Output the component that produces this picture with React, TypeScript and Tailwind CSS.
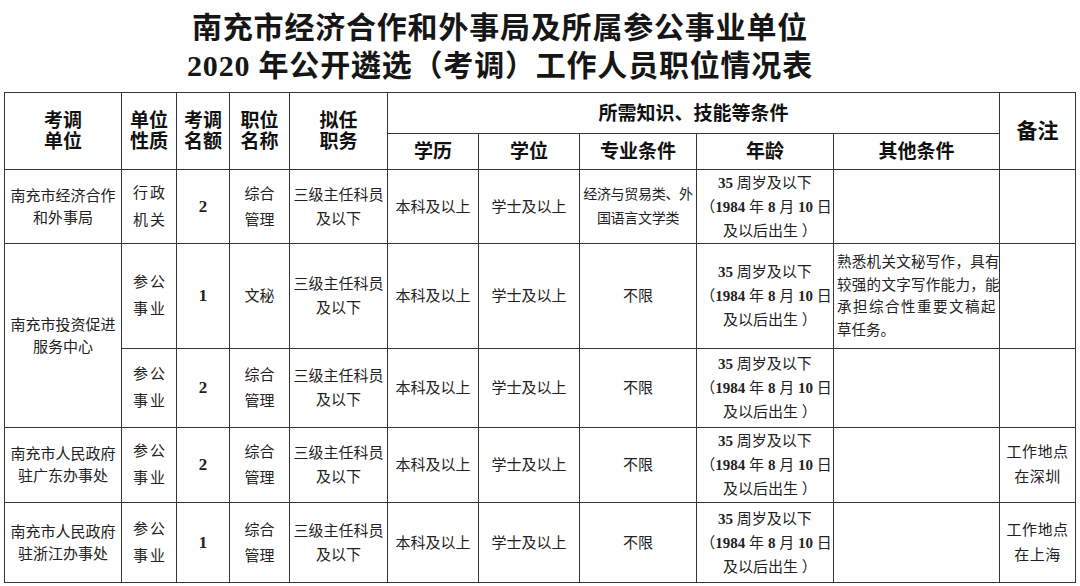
const serif = "font-['Liberation_Serif','Noto_Sans_CJK_SC',sans-serif]";

const Lines = ({ lines }: { lines: React.ReactNode[] }) => (
  <div className="flex flex-col items-center">
    {lines.map((l, i) => (
      <div key={i} className="whitespace-nowrap">
        {l}
      </div>
    ))}
  </div>
);

const Age = () => (
  <div className="flex flex-col items-center leading-[24px] text-[15px]">
    <div className="whitespace-nowrap">
      <b>35</b> 周岁及以下
    </div>
    <div className="whitespace-nowrap pl-[2px]">
      （<b>1984</b> 年 <b>8</b> 月 <b>10</b> 日
    </div>
    <div className="whitespace-nowrap pl-[10px]">及以后出生 ）</div>
  </div>
);

type Row = {
  unit?: React.ReactNode[];
  unitSpan?: number;
  kind: string[];
  count: string;
  post: string[];
  duty: string[];
  major: string[];
  other?: boolean;
  note?: string[];
  h: string;
};

const rows: Row[] = [
  {
    unit: ["南充市经济合作", "和外事局"],
    kind: ["行政", "机关"],
    count: "2",
    post: ["综合", "管理"],
    duty: ["三级主任科员", "及以下"],
    major: ["经济与贸易类、外", "国语言文学类"],
    h: "h-[74px]",
  },
  {
    unit: ["南充市投资促进", "服务中心"],
    unitSpan: 2,
    kind: ["参公", "事业"],
    count: "1",
    post: ["文秘"],
    duty: ["三级主任科员", "及以下"],
    major: ["不限"],
    other: true,
    h: "h-[105px]",
  },
  {
    kind: ["参公", "事业"],
    count: "2",
    post: ["综合", "管理"],
    duty: ["三级主任科员", "及以下"],
    major: ["不限"],
    h: "h-[79px]",
  },
  {
    unit: ["南充市人民政府", "驻广东办事处"],
    kind: ["参公", "事业"],
    count: "2",
    post: ["综合", "管理"],
    duty: ["三级主任科员", "及以下"],
    major: ["不限"],
    note: ["工作地点", "在深圳"],
    h: "h-[75px]",
  },
  {
    unit: ["南充市人民政府", "驻浙江办事处"],
    kind: ["参公", "事业"],
    count: "1",
    post: ["综合", "管理"],
    duty: ["三级主任科员", "及以下"],
    major: ["不限"],
    note: ["工作地点", "在上海"],
    h: "h-[80px]",
  },
];

const td = "border border-[#363636] text-center align-middle p-0";
const th = "border border-[#363636] text-center align-middle p-0 font-bold text-[19px] leading-[21px] text-[#111]";

export default function App() {
  return (
    <div className={`w-[1080px] h-[586px] bg-white overflow-hidden ${serif}`}>
      <div className="pt-[9px] pr-[80px] text-center text-[30px] leading-[38px] font-bold text-[#161616] tracking-[0.8px]">
        <div>南充市经济合作和外事局及所属参公事业单位</div>
        <div>2020 年公开遴选（考调）工作人员职位情况表</div>
      </div>
      <table className="mt-[7px] ml-[4px] w-[1071px] table-fixed border-collapse">
        <colgroup>
          <col className="w-[117px]" />
          <col className="w-[55px]" />
          <col className="w-[53px]" />
          <col className="w-[60px]" />
          <col className="w-[98px]" />
          <col className="w-[91px]" />
          <col className="w-[101px]" />
          <col className="w-[117px]" />
          <col className="w-[137px]" />
          <col className="w-[166px]" />
          <col className="w-[76px]" />
        </colgroup>
        <thead>
          <tr className="h-[41px]">
            <th rowSpan={2} className={th}>
              <Lines lines={["考调", "单位"]} />
            </th>
            <th rowSpan={2} className={th}>
              <Lines lines={["单位", "性质"]} />
            </th>
            <th rowSpan={2} className={th}>
              <Lines lines={["考调", "名额"]} />
            </th>
            <th rowSpan={2} className={th}>
              <Lines lines={["职位", "名称"]} />
            </th>
            <th rowSpan={2} className={th}>
              <Lines lines={["拟任", "职务"]} />
            </th>
            <th colSpan={5} className={th}>
              所需知识、技能等条件
            </th>
            <th rowSpan={2} className={`${th} text-[21px]`}>
              备注
            </th>
          </tr>
          <tr className="h-[36px]">
            <th className={th}>学历</th>
            <th className={th}>学位</th>
            <th className={th}>专业条件</th>
            <th className={th}>年龄</th>
            <th className={th}>其他条件</th>
          </tr>
        </thead>
        <tbody className="text-[15px] leading-[22px] text-[#222]">
          {rows.map((r, i) => (
            <tr key={i} className={r.h}>
              {r.unit && (
                <td rowSpan={r.unitSpan ?? 1} className={td}>
                  <Lines lines={r.unit} />
                </td>
              )}
              <td className={td}>
                <div className="flex flex-col items-center leading-[27px]">
                  {r.kind.map((k) => (
                    <div key={k} className="tracking-[2px] pl-[2px]">
                      {k}
                    </div>
                  ))}
                </div>
              </td>
              <td className={`${td} font-bold text-[17px]`}>{r.count}</td>
              <td className={td}>
                <div className="flex flex-col items-center leading-[26px]">
                  {r.post.map((k) => (
                    <div key={k}>{k}</div>
                  ))}
                </div>
              </td>
              <td className={td}>
                <div className="leading-[24px]">
                  <Lines lines={r.duty} />
                </div>
              </td>
              <td className={td}>本科及以上</td>
              <td className={td}>学士及以上</td>
              <td className={td}>
                <div className={r.major.length > 1 ? "text-[14px] leading-[24px] tracking-[-0.3px]" : ""}>
                  <Lines lines={r.major} />
                </div>
              </td>
              <td className={td}>
                <Age />
              </td>
              <td className={`${td} text-left`}>
                {r.other && (
                  <div className="px-[3px] text-[14.5px] leading-[22.5px] overflow-hidden">
                    <div className="whitespace-nowrap [text-align-last:justify] tracking-[0.3px]">熟悉机关文秘写作，具有</div>
                    <div className="whitespace-nowrap [text-align-last:justify] tracking-[0.3px]">较强的文字写作能力，能</div>
                    <div className="whitespace-nowrap [text-align-last:justify] tracking-[1.5px]">承担综合性重要文稿起</div>
                    <div className="whitespace-nowrap">草任务。</div>
                  </div>
                )}
              </td>
              <td className={td}>
                {r.note && (
                  <div className="leading-[25px] tracking-[0.5px]">
                    <Lines lines={r.note} />
                  </div>
                )}
              </td>
            </tr>
          ))}
        </tbody>
      </table>
    </div>
  );
}
